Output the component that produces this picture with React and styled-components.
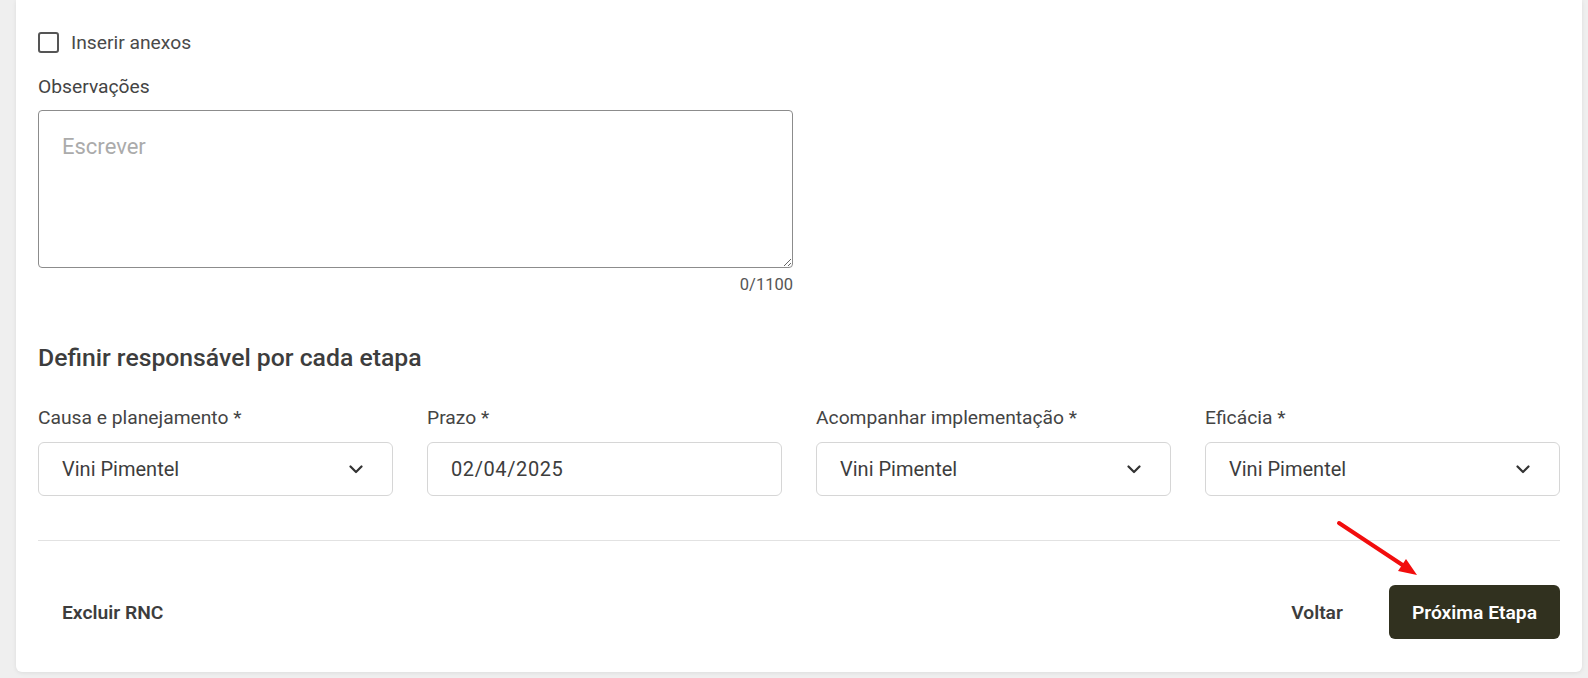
import React, { useState } from 'react';
import styled, { createGlobalStyle } from 'styled-components';

const GlobalStyle = createGlobalStyle`
  html, body {
    margin: 0;
    padding: 0;
    background: #efefef;
    font-family: Roboto, "Noto Sans", sans-serif;
    color: #444;
  }
  * { box-sizing: border-box; }
`;

const Page = styled.div`
  padding: 0 6px 5px 16px;
`;

const Card = styled.div`
  position: relative;
  background: #fff;
  border-radius: 0 0 6px 6px;
  box-shadow: 0 1px 4px rgba(0, 0, 0, 0.08);
  padding: 31px 22px 33px 22px;
`;

const CheckRow = styled.label`
  display: flex;
  align-items: center;
  gap: 12px;
  font-size: 19.25px;
  color: #4a4a4a;
  height: 22px;
  cursor: pointer;
`;

const Box = styled.span`
  width: 21px;
  height: 21px;
  border: 2px solid #555;
  border-radius: 3px;
  background: ${({ $checked }) => ($checked ? '#31311f' : '#fff')};
`;

const Label = styled.div`
  font-size: 19.25px;
  color: #444;
  line-height: 22px;
  margin-bottom: ${({ $mb }) => $mb || 12}px;
`;

const Field = styled.div`
  width: 755px;
  margin-top: ${({ $mt }) => $mt || 0}px;
`;

const TextArea = styled.textarea`
  display: block;
  width: 100%;
  height: 158px;
  border: 1px solid #8c8c8c;
  border-radius: 4px;
  padding: 23px 23px;
  font-family: Roboto, "Noto Sans", sans-serif;
  font-size: 22px;
  color: #444;
  resize: vertical;
  outline: none;
  &::placeholder { color: #ababab; }
`;

const Counter = styled.div`
  text-align: right;
  font-size: 16.5px;
  color: #555;
  margin-top: 8px;
  line-height: 18px;
`;

const Heading = styled.h2`
  margin: 50px 0 0;
  font-size: 24.75px;
  font-weight: 500;
  color: #3d3d3d;
  line-height: 28px;
`;

const Grid = styled.div`
  display: grid;
  grid-template-columns: repeat(4, 1fr);
  gap: 34px;
  margin-top: 35px;
`;

const Col = styled.div`
  display: flex;
  flex-direction: column;
`;

const Control = styled.div`
  height: 54px;
  border: 1px solid #d6d6d6;
  border-radius: 6px;
  display: flex;
  align-items: center;
  justify-content: space-between;
  padding: 0 29px 0 23px;
  font-size: 20px;
  letter-spacing: ${({ $mono }) => ($mono ? '0.6px' : '0')};
  color: #3d3d3d;
  background: #fff;
`;

const Divider = styled.hr`
  border: none;
  border-top: 1px solid #e2e2e2;
  margin: 44px 0 0;
`;

const Footer = styled.div`
  display: flex;
  align-items: center;
  justify-content: space-between;
  margin-top: 44px;
`;

const Actions = styled.div`
  display: flex;
  align-items: center;
  gap: 22px;
`;

const Button = styled.button`
  height: 54px;
  padding: 0 ${({ $primary }) => ($primary ? 23 : 24)}px;
  border: none;
  border-radius: 6px;
  background: ${({ $primary }) => ($primary ? '#31311f' : 'transparent')};
  color: ${({ $primary }) => ($primary ? '#fff' : '#3d3d3d')};
  font-family: Roboto, "Noto Sans", sans-serif;
  font-size: 19.25px;
  font-weight: 600;
  cursor: pointer;
`;

const Arrow = styled.svg`
  position: absolute;
  left: 1318px;
  top: 515px;
  pointer-events: none;
`;

const Chevron = () => (
  <svg width="14" height="9" viewBox="0 0 14 9" fill="none">
    <path d="M1.5 1.5 L7 7 L12.5 1.5" stroke="#333" strokeWidth="2.2" strokeLinecap="round" strokeLinejoin="round" />
  </svg>
);

const fields = [
  { label: 'Causa e planejamento *', value: 'Vini Pimentel', select: true },
  { label: 'Prazo *', value: '02/04/2025' },
  { label: 'Acompanhar implementação *', value: 'Vini Pimentel', select: true },
  { label: 'Eficácia *', value: 'Vini Pimentel', select: true },
];

export default function App() {
  const [checked, setChecked] = useState(false);
  const [obs, setObs] = useState('');

  return (
    <Page>
      <GlobalStyle />
      <Card>
        <CheckRow onClick={() => setChecked(!checked)}>
          <Box $checked={checked} />
          Inserir anexos
        </CheckRow>

        <Field $mt={23}>
          <Label>Observações</Label>
          <TextArea
            placeholder="Escrever"
            value={obs}
            maxLength={1100}
            onChange={(e) => setObs(e.target.value)}
          />
          <Counter>{obs.length}/1100</Counter>
        </Field>

        <Heading>Definir responsável por cada etapa</Heading>

        <Grid>
          {fields.map((f) => (
            <Col key={f.label}>
              <Label $mb={13}>{f.label}</Label>
              <Control $mono={!f.select}>
                {f.value}
                {f.select && <Chevron />}
              </Control>
            </Col>
          ))}
        </Grid>

        <Divider />

        <Footer>
          <Button>Excluir RNC</Button>
          <Actions>
            <Button>Voltar</Button>
            <Button $primary>Próxima Etapa</Button>
          </Actions>
        </Footer>

        {/* annotation arrow pointing at the next-step button */}
        <Arrow width="90" height="66" viewBox="0 0 90 66">
          <line x1="5" y1="8" x2="70" y2="51" stroke="#f20d0d" strokeWidth="4" strokeLinecap="round" />
          <polygon points="83,60 64,56 72,44" fill="#f20d0d" />
        </Arrow>
      </Card>
    </Page>
  );
}
